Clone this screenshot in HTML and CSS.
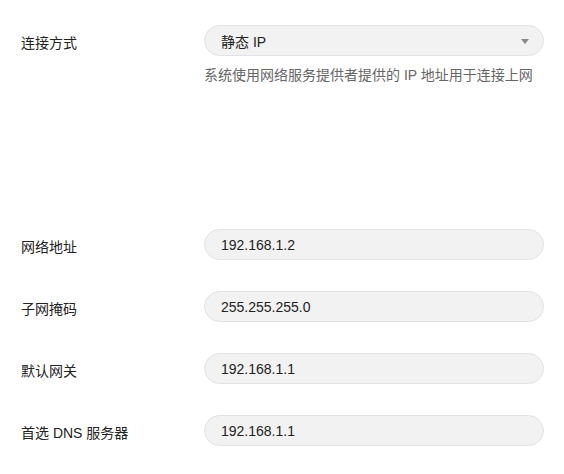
FILE: index.html
```html
<!DOCTYPE html>
<html lang="zh-CN">
<head>
<meta charset="utf-8">
<title>连接方式</title>
<link rel="stylesheet" href="styles.css">
</head>
<body>
<div class="form">
  <div class="row">
    <div class="label">连接方式</div>
    <div class="field">
      <div class="box select">
        <span class="value">静态 IP</span>
        <span class="caret"></span>
      </div>
      <p class="hint">系统使用网络服务提供者提供的 IP 地址用于连接上网</p>
    </div>
  </div>
  <div class="rows">
    <div class="row">
      <div class="label">网络地址</div>
      <div class="field"><div class="box"><span class="value">192.168.1.2</span></div></div>
    </div>
    <div class="row">
      <div class="label">子网掩码</div>
      <div class="field"><div class="box"><span class="value">255.255.255.0</span></div></div>
    </div>
    <div class="row">
      <div class="label">默认网关</div>
      <div class="field"><div class="box"><span class="value">192.168.1.1</span></div></div>
    </div>
    <div class="row">
      <div class="label">首选 DNS 服务器</div>
      <div class="field"><div class="box"><span class="value">192.168.1.1</span></div></div>
    </div>
  </div>
</div>
</body>
</html>
```
FILE: styles.css
```css
html, body {
  margin: 0;
  padding: 0;
  background: #ffffff;
}
body {
  font-family: "Liberation Sans", "Noto Sans CJK SC", sans-serif;
  font-size: 14px;
  color: #333333;
}
.form {
  padding: 25px 0 0 21px;
}
.row {
  display: grid;
  grid-template-columns: 183px 340px;
  align-items: start;
}
.label {
  line-height: 28px;
  padding-top: 4px;
  color: #222222;
}
.box {
  box-sizing: border-box;
  height: 31px;
  border: 1px solid #e2e2e6;
  border-radius: 16px;
  background: #f2f2f2;
  display: flex;
  align-items: center;
  padding: 0 14px 0 16px;
  color: #222222;
}
.select {
  justify-content: space-between;
}
.caret {
  width: 0;
  height: 0;
  border-left: 4.5px solid transparent;
  border-right: 4.5px solid transparent;
  border-top: 5px solid #8a8a8a;
  margin-top: 1px;
}
.hint {
  margin: 9px 0 0 0;
  line-height: 20px;
  color: #666666;
}
.rows {
  margin-top: 144px;
  display: flex;
  flex-direction: column;
  gap: 30px;
}
```
